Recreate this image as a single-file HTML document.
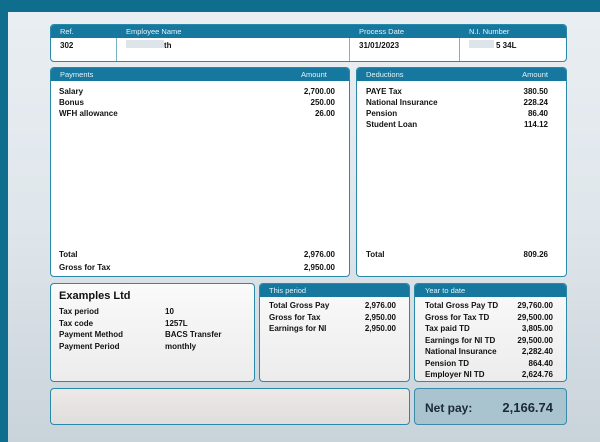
<!DOCTYPE html>
<html><head><meta charset="utf-8"><style>
*{margin:0;padding:0;box-sizing:border-box}
body{width:600px;height:442px;overflow:hidden;position:relative;font-family:"Liberation Sans",sans-serif;background:#0f6d8e}
.page{position:absolute;left:8px;top:12px;width:592px;height:430px;background:linear-gradient(180deg,#e9eef2 0%,#dfe6eb 50%,#c9d3da 100%)}
.box{position:absolute;border:1.5px solid #2a88a8;border-radius:4px;background:#fff;overflow:hidden}
.hd{position:absolute;left:0;right:0;top:0;height:13px;background:#16789e;color:#e6f2f7;font-size:7.5px;line-height:13px}
.t{position:absolute;font-size:8px;font-weight:bold;color:#111;white-space:nowrap}
.r{text-align:right}
.vl{position:absolute;top:13px;bottom:0;width:1px;background:#7ab4c8}
</style></head><body>
<div class="page"></div>

<div class="box" style="left:50px;top:24px;width:517px;height:38px">
 <div class="hd"><span style="position:absolute;left:9px">Ref.</span><span style="position:absolute;left:75px">Employee Name</span><span style="position:absolute;left:308px">Process Date</span><span style="position:absolute;left:418px">N.I. Number</span></div>
 <div class="vl" style="left:65px"></div><div class="vl" style="left:298px"></div><div class="vl" style="left:408px"></div>
 <div class="t" style="left:9px;top:16px">302</div>
 <div style="position:absolute;left:75px;top:15px;width:38px;height:8px;background:#dde4ea"></div>
 <div class="t" style="left:113px;top:16px">th</div>
 <div class="t" style="left:308px;top:16px">31/01/2023</div>
 <div style="position:absolute;left:418px;top:15px;width:25px;height:8px;background:#dde4ea"></div>
 <div class="t" style="left:445px;top:16px">5 34L</div>
</div>

<div class="box" style="left:50px;top:67px;width:300px;height:210px">
 <div class="hd"><span style="position:absolute;left:9px">Payments</span><span style="position:absolute;left:250px">Amount</span></div>
 <div class="t" style="left:8px;top:18px;line-height:11px">Salary<br>Bonus<br>WFH allowance</div>
 <div class="t r" style="right:14px;top:18px;line-height:11px">2,700.00<br>250.00<br>26.00</div>
 <div class="t" style="left:8px;top:180px;line-height:13px">Total<br>Gross for Tax</div>
 <div class="t r" style="right:14px;top:180px;line-height:13px">2,976.00<br>2,950.00</div>
</div>

<div class="box" style="left:356px;top:67px;width:211px;height:210px">
 <div class="hd"><span style="position:absolute;left:9px">Deductions</span><span style="position:absolute;right:18px">Amount</span></div>
 <div class="t" style="left:9px;top:18px;line-height:11px">PAYE Tax<br>National Insurance<br>Pension<br>Student Loan</div>
 <div class="t r" style="right:18px;top:18px;line-height:11px">380.50<br>228.24<br>86.40<br>114.12</div>
 <div class="t" style="left:9px;top:182px">Total</div>
 <div class="t r" style="right:18px;top:182px">809.26</div>
</div>

<div class="box" style="left:50px;top:283px;width:205px;height:99px;background:linear-gradient(#fafafa,#ececec)">
 <div class="t" style="left:8px;top:6px;font-size:11px">Examples Ltd</div>
 <div class="t" style="left:8px;top:22px;line-height:11.5px">Tax period<br>Tax code<br>Payment Method<br>Payment Period</div>
 <div class="t" style="left:114px;top:22px;line-height:11.5px">10<br>1257L<br>BACS Transfer<br>monthly</div>
</div>

<div class="box" style="left:259px;top:283px;width:151px;height:99px;background:linear-gradient(#fafafa,#ececec)">
 <div class="hd"><span style="position:absolute;left:9px">This period</span></div>
 <div class="t" style="left:9px;top:16px;line-height:11.5px">Total Gross Pay<br>Gross for Tax<br>Earnings for NI</div>
 <div class="t r" style="right:13px;top:16px;line-height:11.5px">2,976.00<br>2,950.00<br>2,950.00</div>
</div>

<div class="box" style="left:414px;top:283px;width:153px;height:99px;background:linear-gradient(#fafafa,#ececec)">
 <div class="hd"><span style="position:absolute;left:10px">Year to date</span></div>
 <div class="t" style="left:10px;top:16px;line-height:11.5px">Total Gross Pay TD<br>Gross for Tax TD<br>Tax paid TD<br>Earnings for NI TD<br>National Insurance<br>Pension TD<br>Employer NI TD</div>
 <div class="t r" style="right:13px;top:16px;line-height:11.5px">29,760.00<br>29,500.00<br>3,805.00<br>29,500.00<br>2,282.40<br>864.40<br>2,624.76</div>
</div>

<div class="box" style="left:50px;top:388px;width:360px;height:37px;background:linear-gradient(#ece9e7,#e0dedd)"></div>
<div class="box" style="left:414px;top:388px;width:153px;height:37px;background:#a9c3cf;border-color:#3a8aa8">
 <div class="t" style="left:10px;top:12px;font-size:12px;color:#1a2a36">Net pay:</div>
 <div class="t r" style="right:13px;top:11px;font-size:13px;color:#1a2a36">2,166.74</div>
</div>
</body></html>
